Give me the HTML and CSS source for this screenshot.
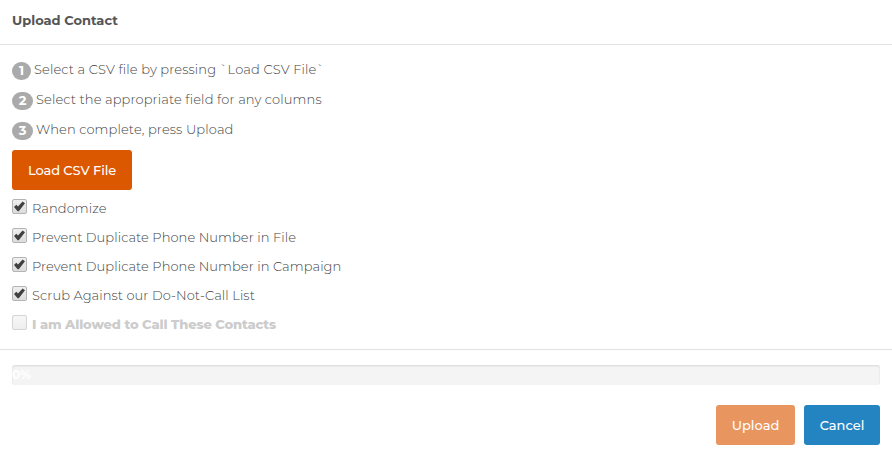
FILE: index.html
```html
<!DOCTYPE html>
<html>
<head>
    <meta charset="utf-8">
    <title>Upload Contact</title>
    <link rel="stylesheet" href="styles.css">
</head>
<body>
    <svg class="defs" width="0" height="0">
        <symbol id="tick" viewBox="0 0 15 15">
            <path d="M2 8 L4.3 5.8 L6 7.4 L10.6 2.4 L13 4.3 L6.8 12.2 L5.6 12.2 Z" fill="#404040"/>
        </symbol>
    </svg>
    <div class="modal-header">
        <h4>Upload Contact</h4>
    </div>
    <div class="modal-body">
        <div class="step"><span class="badge one">1</span><span class="text">Select a CSV file by pressing `Load CSV File`</span></div>
        <div class="step"><span class="badge">2</span><span class="text">Select the appropriate field for any columns</span></div>
        <div class="step"><span class="badge">3</span><span class="text">When complete, press Upload</span></div>
        <button class="btn load">Load CSV File</button>
        <div class="options">
            <label class="check"><span class="box"><svg><use href="#tick"/></svg></span><span class="label">Randomize</span></label>
            <label class="check"><span class="box"><svg><use href="#tick"/></svg></span><span class="label">Prevent Duplicate Phone Number in File</span></label>
            <label class="check"><span class="box"><svg><use href="#tick"/></svg></span><span class="label">Prevent Duplicate Phone Number in Campaign</span></label>
            <label class="check"><span class="box"><svg><use href="#tick"/></svg></span><span class="label">Scrub Against our Do-Not-Call List</span></label>
            <label class="check disabled"><span class="box"></span><span class="label">I am Allowed to Call These Contacts</span></label>
        </div>
    </div>
    <div class="modal-footer">
        <div class="progress"><span>0%</span></div>
        <div class="actions">
            <button class="btn upload">Upload</button>
            <button class="btn cancel">Cancel</button>
        </div>
    </div>
</body>
</html>
```
FILE: styles.css
```css
*{
    box-sizing: border-box;
}
body{
    margin: 0;
    background-color: #fff;
    color: #444;
    font-family: Montserrat, Inter, sans-serif;
    font-size: 13px;
    font-weight: 300;
    line-height: 20px;
    white-space: nowrap;
}
.defs{
    display: block;
}
.modal-header{
    height: 45px;
    padding: 10px 12px;
    border-bottom: 1px solid #e2e2e2;
}
h4{
    margin: 0;
    color: #555;
    font-size: 13px;
    font-weight: 700;
}
.modal-body{
    height: 304px;
    padding: 14px 12px 0;
}
.step{
    display: flex;
    height: 30px;
    gap: 3px;
}
.text{
    letter-spacing: 0.12px;
}
.badge{
    width: 21px;
    height: 18px;
    margin-top: 3px;
    border-radius: 9px;
    background-color: #aaa;
    color: #fff;
    font-weight: 700;
    line-height: 17px;
    text-align: center;
}
.badge.one{
    width: 19px;
}
.btn{
    height: 40px;
    padding: 0;
    border: 0;
    border-radius: 3px;
    color: #fff;
    font-family: inherit;
    font-size: 13px;
    font-weight: 500;
    text-align: center;
}
.load{
    display: block;
    width: 120px;
    margin-top: 1px;
    background-color: #dc5800;
    letter-spacing: -0.1px;
}
.options{
    padding-top: 8px;
}
.check{
    display: flex;
    height: 29px;
    gap: 5px;
}
.label{
    letter-spacing: 0.07px;
}
.box{
    width: 15px;
    height: 15px;
    margin-top: 1px;
    border: 1px solid #b4b4b4;
    border-radius: 2px;
    background: linear-gradient(#efefef, #dcdcdc);
}
.box svg{
    display: block;
    width: 15px;
    height: 15px;
    margin: -1px;
}
.disabled{
    color: #ccc;
    font-weight: 800;
}
.disabled .label{
    letter-spacing: -0.12px;
}
.disabled .box{
    border-color: #d5d5d5;
    background: linear-gradient(#f7f7f7, #eee);
}
.modal-footer{
    padding: 15px 12px 12px;
    border-top: 1px solid #e2e2e2;
}
.progress{
    height: 20px;
    border-radius: 3px;
    background-color: #f4f4f4;
    box-shadow: inset 0 1px 2px rgba(0, 0, 0, 0.12);
    color: #fff;
    font-size: 12px;
    font-weight: 700;
}
.actions{
    display: flex;
    justify-content: flex-end;
    gap: 9px;
    padding-top: 20px;
}
.upload{
    width: 79px;
    background-color: #e8955f;
}
.cancel{
    width: 76px;
    background-color: #2484c2;
}
```
